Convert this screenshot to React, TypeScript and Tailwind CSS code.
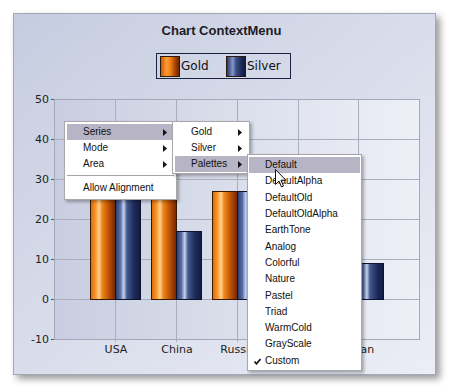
import React from 'react';

const menuFont = { fontFamily: '"Liberation Sans", Arial, sans-serif' };

// Germany's label sits fully under the palettes menu, so it is left blank
const cats = [
  { name: 'USA', x: 101, gold: 31, silver: 30 },
  { name: 'China', x: 162, gold: 32, silver: 17 },
  { name: 'Russia', x: 223, gold: 27, silver: 27 },
  { name: '', x: 284, gold: 24, silver: 26 },
  { name: 'Japan', x: 344, gold: 20, silver: 9 },
];

const palettes = [
  'Default',
  'DefaultAlpha',
  'DefaultOld',
  'DefaultOldAlpha',
  'EarthTone',
  'Analog',
  'Colorful',
  'Nature',
  'Pastel',
  'Triad',
  'WarmCold',
  'GrayScale',
  'Custom',
];

const Arrow = () => (
  <svg width="4" height="7" viewBox="0 0 4 7" className="shrink-0">
    <path d="M0 0 L4 3.5 L0 7 Z" fill="#111" />
  </svg>
);

const MenuItem: React.FC<{ label: string; active?: boolean; sub?: boolean; pl: string; arrowRight: string }> = ({
  label,
  active,
  sub,
  pl,
  arrowRight,
}) => (
  <div className={`flex items-center justify-between h-[16px] ${pl} ${arrowRight} ${active ? 'bg-[#b6b4c5]' : ''}`}>
    <span className="text-[10px] text-[#111] leading-none">{label}</span>
    {sub && <Arrow />}
  </div>
);

function Chart() {
  const rows = [14, 54, 94, 134, 174, 214, 254];
  const labels = ['50', '40', '30', '20', '10', '0', '-10'];
  return (
    <svg width="421" height="289" className="block mt-[6px]" style={{ fontFamily: '"DejaVu Sans", Verdana, sans-serif' }}>
      <defs>
        <linearGradient id="plotBg" x1="0" x2="1" y1="0" y2="0">
          <stop offset="0" stopColor="#c8cee0" />
          <stop offset="1" stopColor="#eef0f7" />
        </linearGradient>
        <linearGradient id="goldBar" x1="0" x2="1" y1="0" y2="0">
          <stop offset="0" stopColor="#d86a08" />
          <stop offset="0.22" stopColor="#ff9a2c" />
          <stop offset="0.34" stopColor="#ffd59a" />
          <stop offset="0.46" stopColor="#f08a1c" />
          <stop offset="0.75" stopColor="#b84c02" />
          <stop offset="1" stopColor="#6e2600" />
        </linearGradient>
        <linearGradient id="silverBar" x1="0" x2="1" y1="0" y2="0">
          <stop offset="0" stopColor="#2a3a6c" />
          <stop offset="0.2" stopColor="#5b70a6" />
          <stop offset="0.33" stopColor="#c6d2ee" />
          <stop offset="0.46" stopColor="#44578c" />
          <stop offset="0.75" stopColor="#1c2a58" />
          <stop offset="1" stopColor="#121c40" />
        </linearGradient>
      </defs>
      <rect x="40.5" y="14.5" width="365" height="240" fill="url(#plotBg)" stroke="#a3a7b9" />
      {rows.slice(1, 6).map((y) => (
        <line key={y} x1="40" x2="405" y1={y + 0.5} y2={y + 0.5} stroke="#a9adbe" />
      ))}
      {cats.map((c) => (
        <line key={c.x} x1={c.x + 0.5} x2={c.x + 0.5} y1="14" y2="257" stroke="#a9adbe" />
      ))}
      {rows.map((y, i) => (
        <g key={y}>
          <line x1="37" x2="40" y1={y + 0.5} y2={y + 0.5} stroke="#555" />
          <text x="35" y={y + 4} textAnchor="end" fontSize="11" fill="#222">
            {labels[i]}
          </text>
        </g>
      ))}
      {cats.map((c) => (
        <g key={c.x + 'b'}>
          <rect x={c.x - 25 + 0.5} y={214 - c.gold * 4 + 0.5} width="25" height={c.gold * 4} fill="url(#goldBar)" stroke="#3a1800" />
          <rect x={c.x + 0.5} y={214 - c.silver * 4 + 0.5} width="25" height={c.silver * 4} fill="url(#silverBar)" stroke="#0c1230" />
          {c.name && (
            <text x={c.x + 1} y="268" textAnchor="middle" fontSize="11" fill="#222">
              {c.name}
            </text>
          )}
        </g>
      ))}
    </svg>
  );
}

const Swatch: React.FC<{ kind: 'gold' | 'silver' }> = ({ kind }) => (
  <div
    className={`w-[20px] h-[21px] border border-[#2a1a10] ${
      kind === 'gold'
        ? 'bg-[linear-gradient(90deg,#c85a08_0%,#ff9a30_30%,#f0861c_50%,#a84000_80%,#6a2600_100%)]'
        : 'bg-[linear-gradient(90deg,#26346a_0%,#8496c8_32%,#3c4f86_50%,#1c2a58_80%,#111a3e_100%)]'
    }`}
  />
);

export default function App() {
  return (
    <div className="relative w-[450px] h-[389px] bg-white overflow-hidden">
      <div className="ml-[13px] mt-[13px] w-[423px] h-[362px] border border-[#a2a7ba] bg-gradient-to-br from-[#c6cce0] to-[#eceef6] shadow-[4px_4px_7px_rgba(0,0,0,0.4)] flex flex-col">
        <div
          className="pt-[9px] h-[25px] leading-[16px] text-center pr-[6px] text-[13px] font-bold text-[#1c1c28]"
          style={{ fontFamily: '"Liberation Sans", Arial, sans-serif' }}
        >
          Chart ContextMenu
        </div>
        <div
          className="mt-[14px] ml-[142px] w-[135px] h-[26px] border-[1.5px] border-[#1a2142] flex items-center pl-[3px] gap-[1px]"
          style={{ fontFamily: '"DejaVu Sans", Verdana, sans-serif' }}
        >
          <Swatch kind="gold" />
          <span className="text-[12px] text-[#111] w-[44px]">Gold</span>
          <Swatch kind="silver" />
          <span className="text-[12px] text-[#111]">Silver</span>
        </div>
        <Chart />
      </div>

      {/* main context menu */}
      <div
        className="absolute left-[64px] top-[121px] w-[113px] h-[79px] bg-white border border-[#a8a8ac] shadow-[2px_2px_3px_rgba(0,0,0,0.3)] px-[2px] pt-[2px]"
        style={menuFont}
      >
        <MenuItem label="Series" sub active pl="pl-[16px]" arrowRight="pr-[7px]" />
        <MenuItem label="Mode" sub pl="pl-[16px]" arrowRight="pr-[7px]" />
        <MenuItem label="Area" sub pl="pl-[16px]" arrowRight="pr-[7px]" />
        <div className="h-[8px] flex flex-col justify-center">
          <div className="h-px bg-[#a6a6a6]" />
          <div className="h-px bg-white" />
        </div>
        <MenuItem label="Allow Alignment" pl="pl-[16px]" arrowRight="pr-[7px]" />
      </div>

      {/* series submenu */}
      <div
        className="absolute left-[172px] top-[121px] w-[78px] h-[53px] bg-white border border-[#a8a8ac] shadow-[2px_2px_3px_rgba(0,0,0,0.3)] px-[2px] pt-[2px]"
        style={menuFont}
      >
        <MenuItem label="Gold" sub pl="pl-[16px]" arrowRight="pr-[5px]" />
        <MenuItem label="Silver" sub pl="pl-[16px]" arrowRight="pr-[5px]" />
        <MenuItem label="Palettes" sub active pl="pl-[16px]" arrowRight="pr-[5px]" />
      </div>

      {/* palettes submenu */}
      <div
        className="absolute left-[247px] top-[154px] w-[115px] h-[217px] bg-white border border-[#a8a8ac] shadow-[2px_2px_3px_rgba(0,0,0,0.3)] px-[1px] pt-[2px]"
        style={menuFont}
      >
        {palettes.map((p, i) => (
          <div key={p} className={`relative flex items-center h-[16.3px] pl-[16px] ${i === 0 ? 'bg-[#b6b4c5]' : ''}`}>
            {p === 'Custom' && (
              <svg width="7" height="7" viewBox="0 0 7 7" className="absolute left-[5px] top-[5px]">
                <path d="M0.5 3.5 L2.5 5.8 L6.5 1" stroke="#111" strokeWidth="1.6" fill="none" />
              </svg>
            )}
            <span className="text-[10px] text-[#111] leading-none">{p}</span>
          </div>
        ))}
      </div>

      {/* mouse cursor */}
      <svg width="12" height="19" viewBox="0 0 12 19" className="absolute left-[275px] top-[169px]">
        <path d="M0.5 0.5 L0.5 15.5 L4 12 L6.5 18 L8.5 17 L6 11.2 L10.8 11.2 Z" fill="white" stroke="#111" strokeWidth="1" />
      </svg>
    </div>
  );
}
